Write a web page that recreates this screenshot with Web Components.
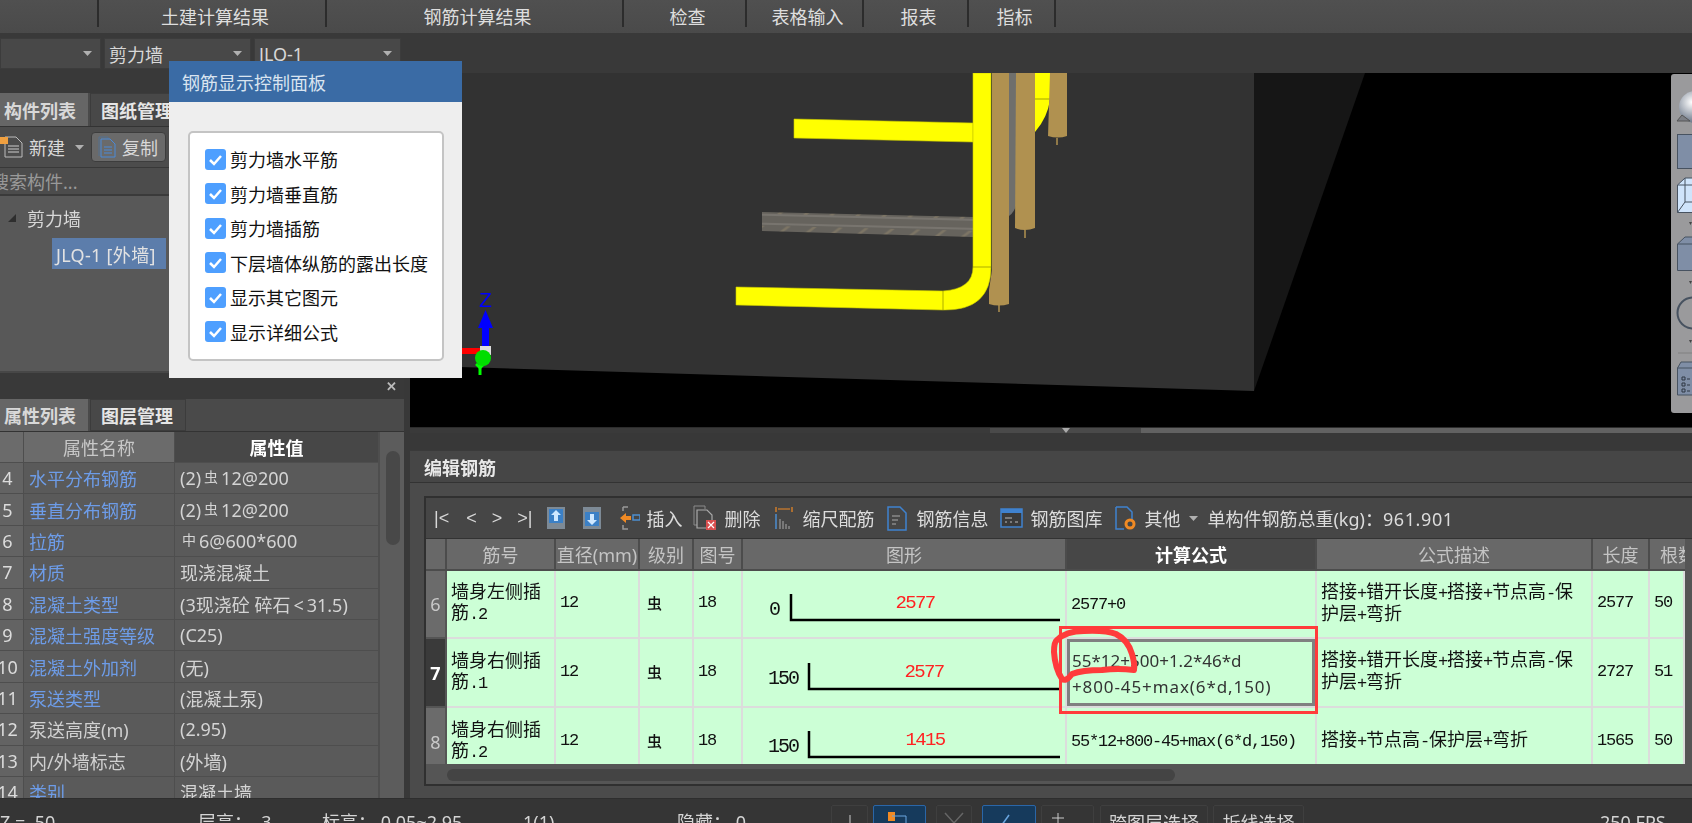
<!DOCTYPE html>
<html lang="zh">
<head>
<meta charset="utf-8">
<title>编辑钢筋</title>
<style>
  html, body { margin: 0; height: 100%; background: #383838; overflow: hidden; }
  body { font: 18px "Noto Sans", "Noto Sans CJK SC", sans-serif; color: #d8d8d8; }
  #app { position: relative; width: 1692px; height: 823px; overflow: hidden; display: flex; flex-direction: column; filter: blur(.4px); }
  #main { display: flex; height: 725px; }
  #left { width: 404px; display: flex; flex-direction: column; flex: none; }
  #right { flex: 1; margin-left: 6px; min-width: 0; display: flex; flex-direction: column; }
</style>
</head>
<body>
<div id="app">
  <menu-bar></menu-bar>
  <combo-bar></combo-bar>
  <div id="main">
    <div id="left">
      <tree-panel></tree-panel>
      <prop-panel></prop-panel>
    </div>
    <div id="right">
      <view-3d></view-3d>
      <rebar-editor></rebar-editor>
    </div>
  </div>
  <status-bar></status-bar>
  <rebar-dialog>
    <rebar-check>剪力墙水平筋</rebar-check>
    <rebar-check>剪力墙垂直筋</rebar-check>
    <rebar-check>剪力墙插筋</rebar-check>
    <rebar-check>下层墙体纵筋的露出长度</rebar-check>
    <rebar-check>显示其它图元</rebar-check>
    <rebar-check>显示详细公式</rebar-check>
  </rebar-dialog>
  <markup-overlay></markup-overlay>
</div>

<script>
const caret = `<svg width="9" height="5" viewBox="0 0 9 5"><path d="M0 0h9L4.5 5z" fill="#b0b0b0"/></svg>`;

class MenuBar extends HTMLElement {
  constructor() {
    super();
    this.attachShadow({ mode: "open" });
  }

  connectedCallback() {
    const tabs = [[99, ""], [228, "土建计算结果"], [297, "钢筋计算结果"], [123, "检查"], [117, "表格输入"], [105, "报表"], [87, "指标"]];
    this.shadowRoot.innerHTML = `
    <style>
      :host { display: flex; height: 33px; flex: none; background: linear-gradient(#505050, #4a4a4a); border-bottom: 2px solid #2f2f2f; box-sizing: content-box; margin-bottom: -2px; }
      div { height: 27px; padding: 4px 0 0 6px; display: flex; align-items: center; justify-content: center; box-sizing: border-box; border-right: 2px solid #2c2c2c; color: #dedede; }
    </style>
    ${tabs.map(t => `<div style="width:${t[0]}px">${t[1]}</div>`).join("")}`;
  }
}
customElements.define("menu-bar", MenuBar);

class ComboBar extends HTMLElement {
  constructor() {
    super();
    this.attachShadow({ mode: "open" });
  }

  connectedCallback() {
    const items = [[101, ""], [147, "剪力墙"], [147, "JLQ-1"]];
    this.shadowRoot.innerHTML = `
    <style>
      :host { display: flex; gap: 3px; height: 40px; flex: none; padding-top: 5px; box-sizing: border-box; background: #393939; }
      div { height: 31px; padding: 0 8px 0 4px; box-sizing: border-box; display: flex; align-items: center; justify-content: space-between; background: #484848; border: 1px solid #3c3c3c; }
    </style>
    ${items.map(t => `<div style="width:${t[0]}px"><span>${t[1]}</span>${caret}</div>`).join("")}`;
  }
}
customElements.define("combo-bar", ComboBar);

class TreePanel extends HTMLElement {
  constructor() {
    super();
    this.attachShadow({ mode: "open" });
  }

  connectedCallback() {
    this.shadowRoot.innerHTML = `
    <style>
      :host { display: block; flex: none; height: 326px; background: #393939; }
      .tabs { margin-top: 20px; height: 34px; display: flex; background: #4a4a4a; border-bottom: 1px solid #333; box-sizing: border-box; }
      .tab { display: flex; align-items: center; padding: 0 12px 0 4px; font-weight: 700; font-size: 18px; color: #d8d8d8; }
      .tab.on { width: 88px; background: #666; box-sizing: border-box; margin-right: 2px; }
      .tab.off { padding-left: 10px; background: #484848; color: #e6e6e6; border: 1px solid #3c3c3c; border-bottom: 0; width: 130px; box-sizing: border-box; }
      .tools { height: 41px; background: #4c4c4c; display: flex; align-items: center; border-bottom: 1px solid #383838; box-sizing: border-box; }
      .tools svg { flex: none; }
      .copy { margin-left: 7px; width: 75px; height: 30px; box-sizing: border-box; background: #6a6a6a; border: 1px solid #3d3d3d; border-radius: 4px; display: flex; align-items: center; gap: 6px; padding-left: 6px; }
      .search { height: 28px; background: #4c4c4c; color: #999; display: flex; align-items: center; border-bottom: 2px solid #3a3a3a; box-sizing: border-box; text-indent: -9px; overflow: hidden; }
      .tree { height: 177px; background: #585858; padding-top: 7px; box-sizing: border-box; border-bottom: 2px solid #474747; }
      .node { display: flex; align-items: center; height: 30px; padding-left: 8px; gap: 11px; }
      .node svg { flex: none; }
      .sel { margin: 5px 0 0 52px; width: 114px; height: 31px; padding-left: 4px; box-sizing: border-box; background: #5c7dab; display: flex; align-items: center; color: #e2e2e2; white-space: nowrap; letter-spacing: .3px; }
      .close { height: 25px; display: flex; align-items: center; justify-content: flex-end; padding-right: 7px; color: #bbb; background: #393939; font-size: 13px; font-weight: 700; }
    </style>
    <div class="tabs"><div class="tab on">构件列表</div><div class="tab off">图纸管理</div></div>
    <div class="tools">
      <svg width="29" height="26" viewBox="0 0 29 26"><path d="M5 3h11l6 6v14H5z" fill="none" stroke="#bbb"/><path d="M8 12h11M8 15h11M8 18h11" stroke="#ccc"/><rect x="0" y="3" width="8" height="7" fill="#f0a040"/></svg>
      <span>新建</span>
      <span style="margin-left:10px;display:flex">${caret}</span>
      <div class="copy">
        <svg width="18" height="22" viewBox="0 0 18 22"><path d="M1 20V1h9v2" fill="none" stroke="#54708f"/><path d="M3 3h9l5 5v13H3z" fill="none" stroke="#4a8ad8"/><path d="M6 11h8M6 14h8M6 17h8" stroke="#4a8ad8"/></svg>
        <span>复制</span>
      </div>
    </div>
    <div class="search">搜索构件...</div>
    <div class="tree">
      <div class="node"><svg width="8" height="8" viewBox="0 0 8 8"><path d="M8 0v8H0z" fill="#2e2e2e"/></svg><span>剪力墙</span></div>
      <div class="sel">JLQ-1 [外墙]</div>
    </div>
    <div class="close">✕</div>`;
  }
}
customElements.define("tree-panel", TreePanel);

class PropPanel extends HTMLElement {
  constructor() {
    super();
    this.attachShadow({ mode: "open" });
  }

  connectedCallback() {
    const steel = `<span class="sym">虫</span>`;
    const rows = [
      [4, "水平分布钢筋", `(2)${steel}12@200`, 1],
      [5, "垂直分布钢筋", `(2)${steel}12@200`, 1],
      [6, "拉筋", `<span class="sym" style="margin-left:2px">中</span>6@600*600`, 1],
      [7, "材质", "现浇混凝土", 1],
      [8, "混凝土类型", "(3现浇砼 碎石<span class=\"lt\">&lt;</span>31.5)", 1],
      [9, "混凝土强度等级", "(C25)", 1],
      [10, "混凝土外加剂", "(无)", 1],
      [11, "泵送类型", "(混凝土泵)", 1],
      [12, "泵送高度(m)", "(2.95)", 0],
      [13, "内/外墙标志", "(外墙)", 0],
      [14, "类别", "混凝土墙", 1]
    ];
    this.shadowRoot.innerHTML = `
    <style>
      :host { display: block; flex: none; height: 399px; background: #5a5a5a; overflow: hidden; position: relative; }
      .tabs { height: 33px; display: flex; background: #4a4a4a; border-bottom: 1px solid #333; box-sizing: border-box; }
      .tab { display: flex; align-items: center; font-weight: 700; }
      .tab.on { width: 88px; padding-left: 4px; box-sizing: border-box; background: #666; color: #d8d8d8; margin-right: 2px; }
      .tab.off { width: 96px; padding-left: 10px; box-sizing: border-box; background: #484848; color: #e6e6e6; border: 1px solid #3c3c3c; }
      .wrap { display: flex; height: 366px; }
      .grid { width: 379px; display: grid; grid-template-columns: 24px 151px 204px; grid-template-rows: 31px; grid-auto-rows: 31.4px; overflow: hidden; flex: none; }
      .grid > div { display: flex; align-items: center; box-sizing: border-box; border-bottom: 1px solid #4e4e4e; border-right: 1px solid #4e4e4e; white-space: nowrap; }
      .no { justify-content: center; padding-right: 8px; background: #636363; color: #dcdcdc; }
      .name { padding-left: 5px; color: #d0d0d0; }
      .name.link { color: #6d9ce8; }
      .val { padding-left: 5px; color: #d4d4d4; white-space: pre; }
      .head { justify-content: center; background: #6b6b6b; color: #c8c8c8; }
      .head.on { background: #474747; color: #fff; font-weight: 700; }
      .sym { font-size: 14px; position: relative; top: -3px; margin: 0 3px; }
      .lt { margin: 0 3px; }
      .bar { flex: 1; background: #5c5c5c; border-left: 1px solid #4e4e4e; padding: 19px 4px 0 6px; box-sizing: border-box; }
      .thumb { height: 94px; background: #484848; border-radius: 7px; }
    </style>
    <div class="tabs"><div class="tab on">属性列表</div><div class="tab off">图层管理</div></div>
    <div class="wrap">
      <div class="grid">
        <div class="head"></div><div class="head">属性名称</div><div class="head on">属性值</div>
        ${rows.map(r => `<div class="no">${r[0]}</div><div class="name ${r[3] ? "link" : ""}">${r[1]}</div><div class="val"><span>${r[2]}</span></div>`).join("")}
      </div>
      <div class="bar"><div class="thumb"></div></div>
    </div>`;
  }
}
customElements.define("prop-panel", PropPanel);

class View3d extends HTMLElement {
  constructor() {
    super();
    this.attachShadow({ mode: "open" });
  }

  connectedCallback() {
    this.shadowRoot.innerHTML = `
    <style>
      :host { display: block; height: 354px; flex: none; background: #000; position: relative; overflow: hidden; }
      svg { display: block; }
      .side { position: absolute; right: 0; top: 1px; }
    </style>
    <svg width="1282" height="354" viewBox="410 73 1282 354">
      <defs>
        <pattern id="rib" width="26" height="20" patternUnits="userSpaceOnUse" patternTransform="rotate(1.4)">
          <rect width="26" height="20" fill="#66635d"/>
          <path d="M2 15 L12 7 H16 L6 15z" fill="#7d7565"/>
          <path d="M0 5 H26 M0 16 H26" stroke="#8a8680" stroke-width="1"/>
        </pattern>
      </defs>
      <path d="M410 73H1254V391L410 365.5z" fill="#323232"/>
      <path d="M1254 73H1365L1254 391z" fill="#161616"/>
      <path d="M1009 73h8v130q-3 10-8 13z" fill="#6f6f6c"/>
      <path d="M1035 73h15v26q-2 18-15 33z" fill="#ff0"/>
      <path d="M1035 99h15" stroke="#a5a500"/>
      <path d="M762 212L973 217V237L762 231z" fill="url(#rib)"/>
      <path d="M794 119L973 123V142L794 138z" fill="#ff0" stroke="#c8c800" stroke-width=".6"/>
      <path d="M736 287L943 291Q973 289 973 267V73H991V267Q991 311 943 310L736 305z" fill="#ff0" stroke="#c8c800" stroke-width=".6"/>
      <path d="M973 267H991M943 291V310" stroke="#8a8a00" stroke-width=".7"/>
      <path d="M992 73H1009V304Q999 307 989 304V290L992 270z" fill="#b09150"/>
      <path d="M1016 73H1035V228Q1025 232 1015 228z" fill="#b09150"/>
      <path d="M1050 73H1067V136Q1058 139 1048 136z" fill="#b09150"/>
      <path d="M999 305V312M1025 230V238M1057 138V145" stroke="#b09150" stroke-width="1.5"/>
      <path d="M482 328H489V348H482zM478 328L485.500 310L493 328z" fill="#00f"/>
      <text x="479" y="307" font-family="Liberation Sans" font-size="21" fill="#00f">Z</text>
      <rect x="462" y="348" width="19" height="6" fill="#f00"/>
      <rect x="480" y="346" width="11" height="9" fill="#ddd"/>
      <path d="M480 362V375" stroke="#0f0" stroke-width="3"/>
      <path d="M476 364L480 368L484 364" stroke="#0f0" stroke-width="2.500" fill="none"/>
      <circle cx="483" cy="358" r="8" fill="#0d0"/>
    </svg>
    <svg class="side" width="21" height="340" viewBox="0 0 21 340">
      <defs><radialGradient id="ball" cx=".4" cy=".35" r=".7"><stop offset="0" stop-color="#fff"/><stop offset="1" stop-color="#5e6b7e"/></radialGradient></defs>
      <path d="M21 0H3Q0 0 0 3V336Q0 339 3 339H21z" fill="#9a9a9c"/>
      <circle cx="24" cy="33" r="16" fill="url(#ball)"/>
      <path d="M6 47l5-6 8 6z" fill="#7c7f85" stroke="#555"/>
      <rect x="6.500" y="60.500" width="20" height="34" fill="#7f8ea6" stroke="#475260"/>
      <path d="M6.500 138.500V111L14 104H26V138.500z" fill="#cfe4fb" stroke="#475260"/>
      <path d="M14 104V128H26M6.500 138.500L14 128M6.500 111H26" fill="none" stroke="#475260"/>
      <path d="M6.500 196.500V170L14 163H26V196.500zM6.500 170H26" fill="#7f8ea6" stroke="#475260"/>
      <circle cx="22" cy="239" r="15.500" fill="none" stroke="#475260" stroke-width="2"/>
      <path d="M7 279H21" stroke="#808080"/>
      <path d="M6.500 321V294L10 288H26V321zM6.500 294H26" fill="#7f8ea6" stroke="#475260"/>
      <path d="M11 303h3v3h-3zM11 309h3v3h-3zM11 315h3v3h-3zM16 305h3M16 311h3M16 317h3" fill="none" stroke="#2f3742"/>
      <path d="M18 148h3l-1.500 3zM18 207h3l-1.500 3zM18 266h3l-1.500 3z" fill="#444"/>
    </svg>`;
  }
}
customElements.define("view-3d", View3d);

class RebarEditor extends HTMLElement {
  constructor() {
    super();
    this.attachShadow({ mode: "open" });
  }

  static get styles() {
    return /* css */`
      :host { display: block; flex: 1; background: #4b4b4b; overflow: hidden; }
      .split { height: 6px; background: linear-gradient(90deg, #3a3a3a 580px, #4a4a4a 580px, #4a4a4a 731px, #626262 731px); border-top: 1px solid #2c2c2c; box-sizing: border-box; }
      .split svg { display: block; margin-left: 651px; }
      .gap { height: 17px; background: #383838; }
      .title { height: 33px; display: flex; align-items: center; padding-left: 14px; font-weight: 700; color: #e8e8e8; background: #464646; border-top: 1px solid #3a3a3a; border-bottom: 1px solid #333; box-sizing: border-box; }
      .frame { margin: 13px 0 0 14px; height: 290px; background: #555; border: 2px solid #303030; border-right: 0; box-sizing: border-box; }
      .tools { height: 41px; display: flex; align-items: center; background: #464646; border-bottom: 1px solid #333; box-sizing: border-box; color: #dcdcdc; white-space: nowrap; }
      .tools svg { flex: none; }
      .nav { font-family: "Liberation Sans", sans-serif; color: #d8d8d8; }
      .weight b { font-weight: 400; letter-spacing: .6px; }
      .grid { display: grid; grid-template-columns: 21px 109px 84px 54px 49px 324px 250px 276px 57px 35px; grid-template-rows: 32px 68px 69px 69px; width: 1259px; height: 225px; overflow: hidden; background: #ccffd6; }
      .grid > div { box-sizing: border-box; border-right: 2px solid #dcdcdc; border-bottom: 2px solid #dcdcdc; color: #111; display: flex; align-items: center; overflow: hidden; padding-bottom: 3px; }
      .grid > .h { background: #686868; color: #c4c4c4; justify-content: center; border-color: #4c4c4c; white-space: nowrap; padding-bottom: 0; }
      .grid > .h.cut { justify-content: flex-start; padding-left: 10px; border-right: 0; }
      .grid > .h.on { background: #474747; color: #fff; font-weight: 700; }
      .grid > .no { background: #6b6b6b; color: #c8c8c8; justify-content: center; border-color: #555; padding-bottom: 0; }
      .grid > .no.on { background: #3a3a3a; color: #fff; font-weight: 700; }
      .txt { padding: 0 6px 0 4px; line-height: 21px; }
      .n { font: 17px "Liberation Mono", monospace; letter-spacing: -1.2px; }
      .pl { padding-left: 4px; }
      .grid > .sym { padding-left: 7px; font-size: 15px; font-weight: 500; }
      .grid > .shape { padding: 0; align-items: flex-start; }
      .grid > .sel { box-shadow: inset 0 0 0 3px #808080; font: 17px/26px "Noto Sans", sans-serif; padding: 2px 0 0 5px; color: #333; white-space: nowrap; }
      .sel span { letter-spacing: .9px; }
      .scroll { height: 22px; padding: 5px 0 0 21px; box-sizing: border-box; }
      .thumb { width: 728px; height: 12px; border-radius: 6px; background: #444; }
      svg text { font-family: "Liberation Mono", monospace; letter-spacing: -2px; }
      svg text.val { letter-spacing: -1.6px; }
    `;
  }

  shape(label, labelX, legX, value, valueX, top) {
    return `<svg width="322" height="66" viewBox="742 0 322 66">
      <text x="${labelX}" y="${top + 21}" font-size="20" text-anchor="middle" fill="#111">${label}</text>
      <path d="M${legX} ${top}V${top + 26}H1059" fill="none" stroke="#000" stroke-width="2.500"/>
      <text class="val" x="${valueX}" y="${top + 14}" font-size="19" text-anchor="middle" fill="#f22">${value}</text>
    </svg>`;
  }

  connectedCallback() {
    const n = s => s.replace(/[\x20-\x7e]+/g, m => `<span class="n">${m}</span>`);
    const heads = ["", "筋号", "直径(mm)", "级别", "图号", "图形", "计算公式", "公式描述", "长度", "根数"];
    const long = "搭接+错开长度+搭接+节点高-保护层+弯折";
    const rows = [
      [6, "墙身左侧插筋.2", this.shape("0", 773, 790, "2577", 914, 23), `<div class="txt">${n("2577+0")}</div>`, long, 2577, 50],
      [7, "墙身右侧插筋.1", this.shape("150", 782, 808, "2577", 923, 24), "", long, 2727, 51],
      [8, "墙身右侧插筋.2", this.shape("150", 782, 808, "1415", 924, 23), `<div class="txt">${n("55*12+800-45+max(6*d,150)")}</div>`, "搭接+节点高-保护层+弯折", 1565, 50]
    ];
    this.shadowRoot.innerHTML = `
    <style>${RebarEditor.styles}</style>
    <div class="split"><svg width="10" height="5"><path d="M1 0h8L5 5z" fill="#aaa"/></svg></div>
    <div class="gap"></div>
    <div class="title">编辑钢筋</div>
    <div class="frame">
      <div class="tools">
        <span class="nav" style="margin-left:8px">|&lt;</span>
        <span class="nav" style="margin-left:17px">&lt;</span>
        <span class="nav" style="margin-left:15px">&gt;</span>
        <span class="nav" style="margin-left:15px">&gt;|</span>
        <svg style="margin-left:15px" width="18" height="22" viewBox="0 0 18 22"><rect width="18" height="22" fill="#7d8a96"/><rect x="2" y="2" width="14" height="14" fill="#3b80c6"/><path d="M9 3l5 5h-3v6H7V8H4z" fill="#cfe8ff"/></svg>
        <svg style="margin-left:18px" width="18" height="22" viewBox="0 0 18 22"><rect width="18" height="22" fill="#7d8a96"/><rect x="2" y="5" width="14" height="14" fill="#3b80c6"/><path d="M9 18l5-5h-3V7H7v6H4z" fill="#cfe8ff"/></svg>
        <svg style="margin-left:19px" width="20" height="24" viewBox="0 0 20 24"><path d="M3 1h5M3 1v4M3 19v4h5" fill="none" stroke="#999" stroke-width="1.500"/><path d="M0 12L6 7V10H11V14H6V17z" fill="#f08a24"/><rect x="13" y="9" width="7" height="5" fill="none" stroke="#4c8ed0" stroke-width="1.500"/></svg>
        <span style="margin-left:6px">插入</span>
        <svg style="margin-left:11px" width="24" height="26" viewBox="0 0 24 26"><path d="M1 1H12V4M1 1V20H4" fill="none" stroke="#8a8a8a"/><path d="M4 5H14L19 10V23H4z" fill="none" stroke="#aaa" stroke-width="1.200"/><rect x="13" y="15" width="10" height="10" fill="#d94f4f"/><path d="M15 17l6 6M21 17l-6 6" stroke="#fff" stroke-width="1.200"/></svg>
        <span style="margin-left:7px">删除</span>
        <svg style="margin-left:15px" width="18" height="24" viewBox="0 0 18 24"><path d="M1 1v5M17 1v5M3 3H15" stroke="#f08a24" stroke-width="1.200" fill="none"/><path d="M1 8V23" stroke="#4c8ed0" stroke-width="1.500"/><path d="M5 13V23M8 15V23M11 18V23M14 20V23" stroke="#999" stroke-width="1.200"/></svg>
        <span style="margin-left:9px">缩尺配筋</span>
        <svg style="margin-left:13px" width="20" height="25" viewBox="0 0 20 25"><path d="M1 1H13L19 7V24H1z" fill="none" stroke="#3f82cf" stroke-width="1.500"/><path d="M5 10H13M5 14H11M5 18H9" stroke="#aaa" stroke-width="1.200"/></svg>
        <span style="margin-left:9px">钢筋信息</span>
        <svg style="margin-left:12px" width="23" height="20" viewBox="0 0 23 20"><rect x="1" y="1" width="21" height="18" fill="#3a3a3a" stroke="#3f82cf" stroke-width="1.500"/><rect x="1" y="1" width="21" height="4" fill="#3f82cf"/><path d="M5 10H12M5 14H7M10 14H12M15 14H18" stroke="#bbb"/></svg>
        <span style="margin-left:7px">钢筋图库</span>
        <svg style="margin-left:13px" width="22" height="25" viewBox="0 0 22 25"><path d="M1 1H12L17 6V14M1 1V23H9" fill="none" stroke="#3f82cf" stroke-width="1.500"/><circle cx="15" cy="18" r="4" fill="none" stroke="#f08a24" stroke-width="3"/></svg>
        <span style="margin-left:7px">其他</span>
        <span style="margin-left:9px;display:flex">${caret}</span>
        <span class="weight" style="margin-left:9px">单构件钢筋总重(kg)：<b>961.901</b></span>
      </div>
      <div class="grid">
        ${heads.map(h => `<div class="h ${h === "计算公式" ? "on" : ""} ${h === "根数" ? "cut" : ""}">${h}</div>`).join("")}
        ${rows.map(r => `
          <div class="no ${r[0] === 7 ? "on" : ""}">${r[0]}</div>
          <div><div class="txt">${n(r[1])}</div></div>
          <div class="pl n">12</div>
          <div class="sym">虫</div>
          <div class="pl n">18</div>
          <div class="shape">${r[2]}</div>
          ${r[3] ? `<div>${r[3]}</div>` : `<div class="sel"><div>55*12+500+1.2*46*d<br><span>+800-45+max(6*d,150)</span></div></div>`}
          <div><div class="txt">${n(r[4])}</div></div>
          <div class="pl n">${r[5]}</div>
          <div class="pl n">${r[6]}</div>`).join("")}
      </div>
      <div class="scroll"><div class="thumb"></div></div>
    </div>`;
  }
}
customElements.define("rebar-editor", RebarEditor);

class StatusBar extends HTMLElement {
  constructor() {
    super();
    this.attachShadow({ mode: "open" });
  }

  connectedCallback() {
    const blue = "background:#163a5c;border-color:#2a66a8";
    this.shadowRoot.innerHTML = `
    <style>
      :host { display: flex; flex: none; height: 25px; background: #353535; border-top: 1px solid #2e2e2e; box-sizing: border-box; overflow: hidden; white-space: nowrap; color: #d4d4d4; }
      span { margin-top: 11px; line-height: 24px; flex: none; }
      i { display: block; flex: none; font-style: normal; box-sizing: border-box; height: 30px; margin-top: 6px; border: 1px solid #3f3f3f; border-radius: 2px; text-align: center; line-height: 34px; }
      svg { display: block; margin: 3px auto 0; }
    </style>
    <span style="width:198px">Z = &nbsp;50</span>
    <span style="width:124px">层高： &nbsp;3</span>
    <span style="width:201px">标高： 0.05~2.95</span>
    <span style="width:154px">1(1)</span>
    <span style="width:154px">隐藏： 0</span>
    <i style="width:37px"><svg width="2" height="22"><path d="M1 6V22" stroke="#ccc"/></svg></i>
    <i style="width:53px;margin-left:5px;${blue}"><svg width="40" height="22"><rect x="8" y="3" width="7" height="9" fill="#f08a24"/><path d="M12 7H26V22" fill="none" stroke="#6aa6e0"/><path d="M32 18h6l-3 3z" fill="#bbb"/></svg></i>
    <i style="width:36px;margin-left:10px"><svg width="24" height="22"><path d="M3 4L12 14L21 4M12 14V22" fill="none" stroke="#666" stroke-width="1.500"/></svg></i>
    <i style="width:54px;margin-left:10px;${blue}"><svg width="40" height="22"><path d="M10 20L20 6" stroke="#6aa6e0" stroke-width="1.500"/><rect x="9" y="16" width="6" height="6" fill="#f08a24"/><path d="M32 18h6l-3 3z" fill="#bbb"/></svg></i>
    <i style="width:53px;margin-left:5px"><svg width="40" height="22"><path d="M6 6H18M12 1V14" stroke="#ccc" fill="none" transform="translate(-2 3)"/><path d="M30 18h6l-3 3z" fill="#bbb"/></svg></i>
    <i style="width:108px;margin-left:6px">跨图层选择</i>
    <i style="width:91px;margin-left:5px">折线选择</i>
    <span style="margin-left:296px">250 FPS</span>`;
  }
}
customElements.define("status-bar", StatusBar);

class RebarDialog extends HTMLElement {
  constructor() {
    super();
    this.attachShadow({ mode: "open" });
  }

  connectedCallback() {
    this.shadowRoot.innerHTML = `
    <style>
      :host { position: absolute; left: 169px; top: 61px; width: 293px; height: 317px; background: #eee; }
      .head { height: 41px; background: #3a6ba5; color: #d9e4f0; display: flex; align-items: center; padding-left: 13px; box-sizing: border-box; }
      .box { margin: 29px 0 0 19px; width: 256px; height: 230px; box-sizing: border-box; background: #fff; border: 2px solid #c4c4c4; border-radius: 5px; padding: 9px 0 0 15px; }
    </style>
    <div class="head">钢筋显示控制面板</div>
    <div class="box"><slot></slot></div>`;
  }
}
customElements.define("rebar-dialog", RebarDialog);

class RebarCheck extends HTMLElement {
  constructor() {
    super();
    this.attachShadow({ mode: "open" });
  }

  connectedCallback() {
    this.shadowRoot.innerHTML = `
    <style>
      :host { display: flex; align-items: center; height: 34.500px; gap: 4px; color: #111; white-space: nowrap; }
      svg { flex: none; }
    </style>
    <svg width="21" height="21" viewBox="0 0 21 21"><rect width="21" height="21" rx="3" fill="#4e9fff"/><path d="M5 11l4 4 7-8" fill="none" stroke="#fff" stroke-width="2.500"/></svg>
    <slot></slot>`;
  }
}
customElements.define("rebar-check", RebarCheck);

class MarkupOverlay extends HTMLElement {
  constructor() {
    super();
    this.attachShadow({ mode: "open" });
  }

  connectedCallback() {
    this.shadowRoot.innerHTML = `
    <style>
      :host { position: absolute; left: 0; top: 0; pointer-events: none; }
      svg { display: block; }
    </style>
    <svg width="1692" height="823" viewBox="0 0 1692 823">
      <rect x="1060.500" y="627.500" width="256" height="85" fill="none" stroke="#ff3b3b" stroke-width="3"/>
      <path d="M1057 640Q1066 631 1084 631Q1106 630 1116 634Q1128 640 1132 654Q1135 664 1134 670Q1118 668 1102 670Q1082 670 1072 674Q1066 682 1062 679Q1055 668 1054 652Q1054 642 1057 640z" fill="none" stroke="#ff3b3b" stroke-width="6" stroke-linejoin="round"/>
    </svg>`;
  }
}
customElements.define("markup-overlay", MarkupOverlay);
</script>
</body>
</html>
